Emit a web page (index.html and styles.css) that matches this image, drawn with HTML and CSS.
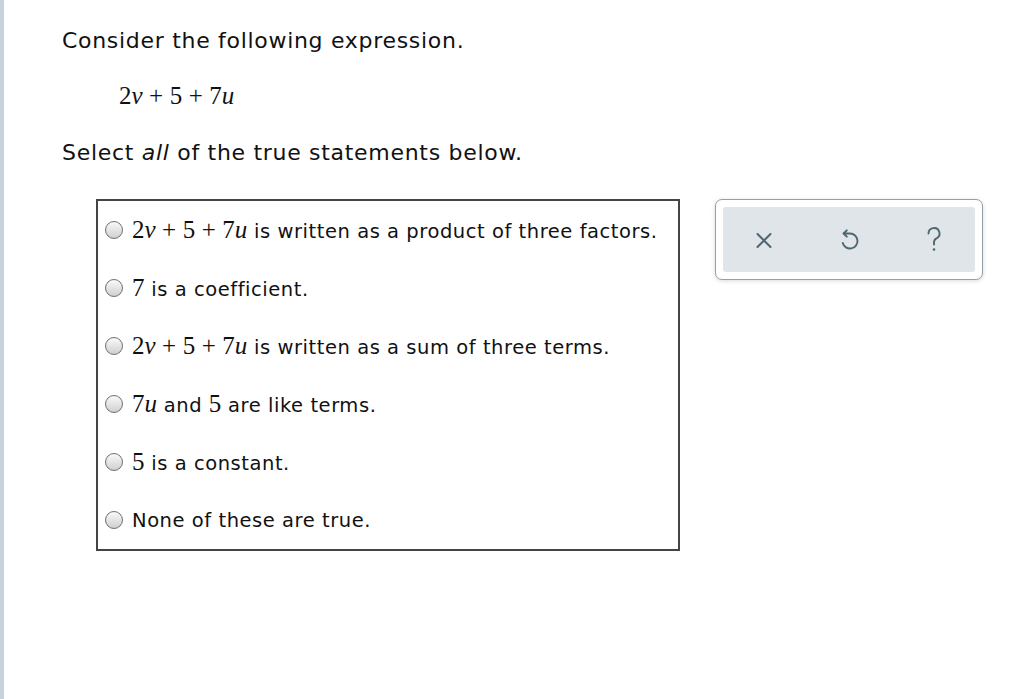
FILE: index.html
```html
<!DOCTYPE html>
<html>
<head>
<meta charset="utf-8">
<link rel="stylesheet" href="styles.css">
</head>
<body>
<div class="page">
  <div class="content">
    <p class="prompt">Consider the following expression.</p>
    <p class="expr"><span class="m">2<i>v</i><span class="op">+</span>5<span class="op">+</span>7<i>u</i></span></p>
    <p class="prompt">Select <i>all</i> of the true statements below.</p>
    <div class="work">
      <div class="choices">
        <div class="choice"><span class="radio"></span><span class="label"><span class="m">2<i>v</i><span class="op">+</span>5<span class="op">+</span>7<i>u</i></span> is written as a product of three factors.</span></div>
        <div class="choice"><span class="radio"></span><span class="label"><span class="m">7</span> is a coefficient.</span></div>
        <div class="choice"><span class="radio"></span><span class="label"><span class="m">2<i>v</i><span class="op">+</span>5<span class="op">+</span>7<i>u</i></span> is written as a sum of three terms.</span></div>
        <div class="choice"><span class="radio"></span><span class="label"><span class="m">7<i>u</i></span> and <span class="m">5</span> are like terms.</span></div>
        <div class="choice"><span class="radio"></span><span class="label"><span class="m">5</span> is a constant.</span></div>
        <div class="choice"><span class="radio"></span><span class="label">None of these are true.</span></div>
      </div>
      <div class="tools">
        <div class="tools-inner">
          <svg class="icon" width="20" height="20" viewBox="0 0 20 20"><path d="M3.5 4 L16.5 17 M16.5 4 L3.5 17" stroke="#4d6672" stroke-width="2" fill="none" stroke-linecap="round"/></svg>
          <svg class="icon" width="20" height="22" viewBox="0 0 20 22"><path d="M3.8 4.5 L10 4.5 A7.5 7.5 0 1 1 2.76 13.94" stroke="#4d6672" stroke-width="1.9" fill="none" stroke-linecap="round"/><path d="M6.8 1.3 L3.6 4.5 L6.8 7.7" stroke="#4d6672" stroke-width="1.9" fill="none" stroke-linecap="round" stroke-linejoin="round"/></svg>
          <svg class="icon" width="18" height="28" viewBox="0 0 18 28"><path d="M3.5 7.5 A5.5 5.5 0 1 1 11.5 12.4 Q9 13.6 9 16.5 L9 18.5" stroke="#4d6672" stroke-width="1.9" fill="none" stroke-linecap="round"/><circle cx="9" cy="23.5" r="1.3" fill="#4d6672"/></svg>
        </div>
      </div>
    </div>
  </div>
</div>
</body>
</html>
```
FILE: styles.css
```css
html, body {
  margin: 0;
  padding: 0;
  background: #ffffff;
}
.page {
  min-height: 699px;
  border-left: 4px solid #c7d2da;
  box-sizing: border-box;
  font-family: "DejaVu Sans", Verdana, sans-serif;
  color: #111;
}
.content {
  padding: 27px 0 0 58px;
}
.prompt {
  margin: 0;
  font-size: 22px;
  letter-spacing: 0.7px;
  line-height: 28px;
}
.expr {
  margin: 27px 0 26px 57px;
  line-height: 28px;
}
.m {
  font-family: "Liberation Serif", "Times New Roman", serif;
  font-size: 25px;
  letter-spacing: 0;
}
.m i {
  font-style: italic;
}
.op {
  padding: 0 6.5px;
}
.work {
  display: flex;
  align-items: flex-start;
  margin-top: 32px;
  margin-left: 34px;
}
.choices {
  width: 580px;
  border: 2px solid #444;
  background: #fff;
}
.choice {
  height: 58px;
  display: flex;
  align-items: center;
  padding-left: 7px;
  font-size: 19.5px;
  letter-spacing: 0.55px;
}
.radio {
  width: 16px;
  height: 16px;
  border-radius: 50%;
  border: 1px solid #6f6f6f;
  background: linear-gradient(#fafafa, #cfcfcf);
  margin-right: 9px;
  flex: none;
}
.label {
  white-space: nowrap;
}
.tools {
  margin-left: 35px;
  width: 268px;
  height: 81px;
  box-sizing: border-box;
  border: 1px solid #8ea2ac;
  border-radius: 7px;
  padding: 7px;
  background: #fff;
  box-shadow: 0 1px 4px rgba(0,0,0,0.15);
}
.tools-inner {
  height: 100%;
  background: #dfe5e8;
  border-radius: 3px;
  display: flex;
  align-items: center;
  justify-content: space-between;
  padding: 0 32px 0 31px;
}
.icon {
  display: block;
}
```
